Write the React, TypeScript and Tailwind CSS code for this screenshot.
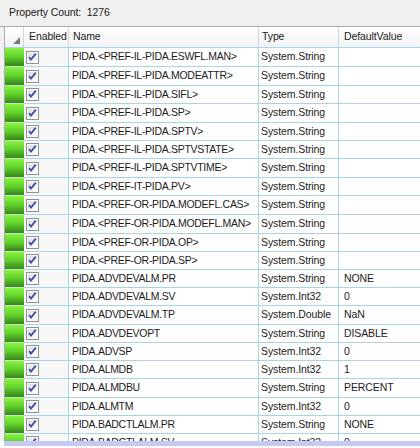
import React from "react";

type Row = { name: string; type: string; value: string; tall: boolean };

const rows: Row[] = [
  { name: "PIDA.<PREF-IL-PIDA.ESWFL.MAN>", type: "System.String", value: "", tall: true },
  { name: "PIDA.<PREF-IL-PIDA.MODEATTR>", type: "System.String", value: "", tall: true },
  { name: "PIDA.<PREF-IL-PIDA.SIFL>", type: "System.String", value: "", tall: false },
  { name: "PIDA.<PREF-IL-PIDA.SP>", type: "System.String", value: "", tall: true },
  { name: "PIDA.<PREF-IL-PIDA.SPTV>", type: "System.String", value: "", tall: false },
  { name: "PIDA.<PREF-IL-PIDA.SPTVSTATE>", type: "System.String", value: "", tall: false },
  { name: "PIDA.<PREF-IL-PIDA.SPTVTIME>", type: "System.String", value: "", tall: true },
  { name: "PIDA.<PREF-IT-PIDA.PV>", type: "System.String", value: "", tall: false },
  { name: "PIDA.<PREF-OR-PIDA.MODEFL.CAS>", type: "System.String", value: "", tall: true },
  { name: "PIDA.<PREF-OR-PIDA.MODEFL.MAN>", type: "System.String", value: "", tall: true },
  { name: "PIDA.<PREF-OR-PIDA.OP>", type: "System.String", value: "", tall: false },
  { name: "PIDA.<PREF-OR-PIDA.SP>", type: "System.String", value: "", tall: false },
  { name: "PIDA.ADVDEVALM.PR", type: "System.String", value: "NONE", tall: false },
  { name: "PIDA.ADVDEVALM.SV", type: "System.Int32", value: "0", tall: false },
  { name: "PIDA.ADVDEVALM.TP", type: "System.Double", value: "NaN", tall: true },
  { name: "PIDA.ADVDEVOPT", type: "System.String", value: "DISABLE", tall: false },
  { name: "PIDA.ADVSP", type: "System.Int32", value: "0", tall: false },
  { name: "PIDA.ALMDB", type: "System.Int32", value: "1", tall: false },
  { name: "PIDA.ALMDBU", type: "System.String", value: "PERCENT", tall: true },
  { name: "PIDA.ALMTM", type: "System.Int32", value: "0", tall: false },
  { name: "PIDA.BADCTLALM.PR", type: "System.String", value: "NONE", tall: false },
  { name: "PIDA.BADCTLALM.SV", type: "System.Int32", value: "0", tall: false },
];

function CheckBox() {
  return (
    <svg width="13" height="13" viewBox="0 0 13 13">
      <defs>
        <linearGradient id="cbfill" x1="0" y1="0" x2="1" y2="1">
          <stop offset="0" stopColor="#dcdcdc" />
          <stop offset="1" stopColor="#ffffff" />
        </linearGradient>
      </defs>
      <rect x="0.5" y="0.5" width="12" height="12" fill="#ffffff" stroke="#8e8f8f" />
      <rect x="2" y="2" width="9" height="9" fill="url(#cbfill)" />
      <path d="M3 6.2 L5 8.6 L9.8 2.6" fill="none" stroke="#3a4fa8" strokeWidth="1.8" />
    </svg>
  );
}

export default function App() {
  return (
    <div
      className="w-[420px] h-[448px] overflow-hidden bg-[#f0f0f0] text-[10.5px] tracking-[-0.1px] text-[#1b1b1b] flex flex-col"
      style={{ fontFamily: '"Liberation Sans", Arial, sans-serif' }}
    >
      <div className="h-[27px] flex items-center pl-[9px] border-b border-[#a9a9a9] bg-[#f0f0f0]">
        Property Count:&nbsp; 1276
      </div>

      <div className="flex-1 flex flex-col overflow-hidden bg-white ml-[4px] border-l border-[#a9a9a9]">
        {/* header */}
        <div className="flex h-[21px] shrink-0 bg-gradient-to-b from-white to-[#f1f2f4] border-b border-[#a6d6e6]">
          <div className="w-[19px] border-r border-[#d5d5d5] flex items-end justify-end pb-[3px] pr-[3px]">
            <svg width="7" height="7" viewBox="0 0 7 7">
              <path d="M7 0 L7 7 L0 7 Z" fill="#7a7a7a" />
            </svg>
          </div>
          <div className="w-[45px] border-r border-[#d5d5d5] flex items-center pl-[5px] whitespace-nowrap">Enabled</div>
          <div className="w-[190px] border-r border-[#d5d5d5] flex items-center pl-[4px]">Name</div>
          <div className="w-[80px] border-r border-[#d5d5d5] flex items-center pl-[3px]">Type</div>
          <div className="flex-1 flex items-center pl-[5px]">DefaultValue</div>
        </div>

        {/* rows */}
        <div className="flex-1 flex flex-col overflow-hidden">
          {rows.map((r, i) => (
            <div key={i} className={`flex shrink-0 ${r.tall ? "h-[19px]" : "h-[18px]"}`}>
              <div className="w-[19px] bg-gradient-to-b from-[#86f53f] via-[#5fcf2b] to-[#35861a] border-b border-[#cfe3c6]" />
              <div className="w-[45px] bg-[#f7f7f7] border-r border-b border-[#a6d6e6] flex items-center pl-[2px]">
                <CheckBox />
              </div>
              <div className="w-[190px] border-r border-b border-[#a6d6e6] flex items-center pl-[3px] tracking-[-0.3px] whitespace-nowrap overflow-hidden">
                {r.name}
              </div>
              <div className="w-[80px] border-r border-b border-[#a6d6e6] flex items-center pl-[2px] whitespace-nowrap overflow-hidden">
                {r.type}
              </div>
              <div className="flex-1 border-b border-[#a6d6e6] flex items-center pl-[5px] whitespace-nowrap overflow-hidden">
                {r.value}
              </div>
            </div>
          ))}
        </div>
      </div>

      <div className="h-[7px] shrink-0 flex bg-white">
        <div className="w-[4px]" />
        <div className="flex-1 h-[5px] bg-[#c8c8f4]" />
      </div>
    </div>
  );
}
